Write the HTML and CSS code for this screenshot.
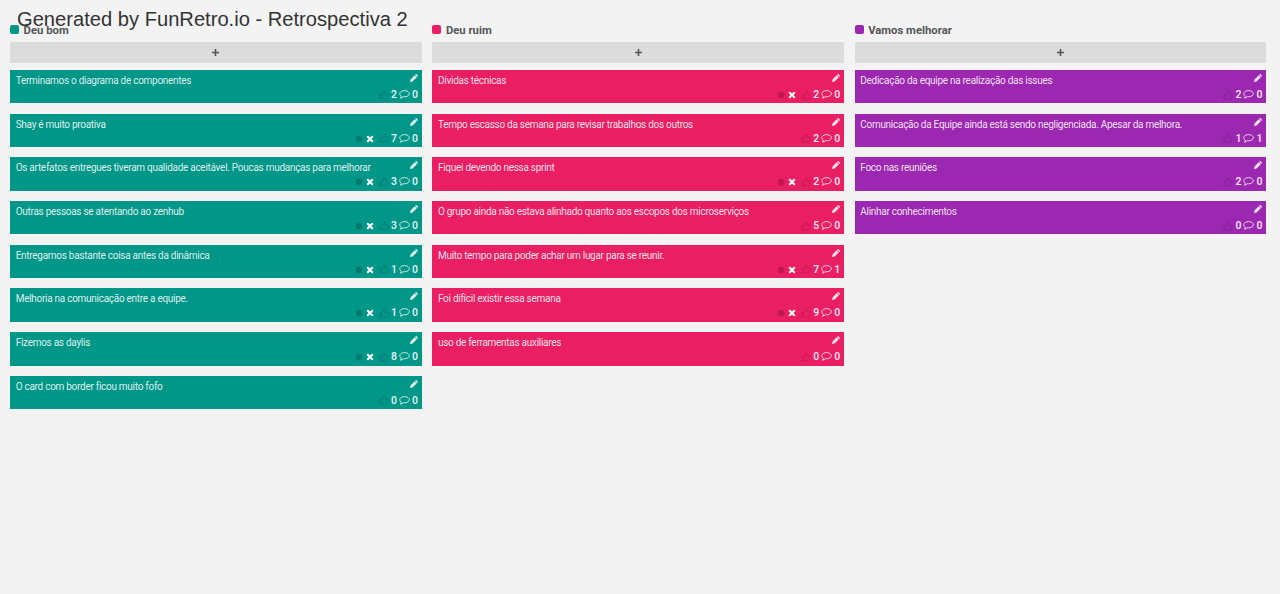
FILE: index.html
```html
<!DOCTYPE html>
<html lang="pt-BR">
<head>
<meta charset="utf-8">
<title>Retrospectiva 2</title>
<link rel="stylesheet" href="styles.css">
</head>
<body>
<svg class="sprite" aria-hidden="true">
  <symbol id="plus" viewBox="0 0 7 7"><path d="M2.7 0h1.6v2.7H7v1.6H4.300V7H2.700V4.300H0V2.700h2.700z"/></symbol>
  <symbol id="pencil" viewBox="0 0 8 8"><path d="M0 8l.5-2.600L4.700 1.200l2.100 2.100L2.600 7.500zM5.100.800l.5-.5q.5-.5 1 0l1.100 1.100q.5.5 0 1l-.5.5z"/></symbol>
  <symbol id="cross" viewBox="0 0 8 8"><path d="M1.9.5L4 2.6 6.1.5l1.4 1.4L5.4 4l2.1 2.1-1.4 1.4L4 5.4 1.9 7.5.5 6.1 2.6 4 .5 1.9z"/></symbol>
  <symbol id="dot" viewBox="0 0 8 8"><circle cx="4" cy="4" r="3.2"/></symbol>
  <symbol id="thumb" viewBox="0 0 10 10"><path d="M.7 4.6h2v4.1h-2zM2.7 4.8C4.2 3.7 4.7 2.8 4.8 1.2c.8-.5 1.7 0 1.6 1.2L6 4h2.5c1 0 1 1.2.4 1.5.5.6.2 1.2-.2 1.4.2.7-.1 1-.5 1.1 0 .8-.4 1.1-1.3 1.1H5.7c-1.3 0-2-.4-3-.4" fill="none" stroke="currentColor" stroke-width=".8"/></symbol>
  <symbol id="comment" viewBox="0 0 11 9"><path d="M5.600.6c2.700 0 4.700 1.400 4.700 3.100S8.300 6.800 5.600 6.800c-.5 0-.9 0-1.300-.1C3.400 7.500 2.500 8 1.400 8.200c.5-.6.8-1.200.9-2C1.300 5.600.8 4.700.8 3.700.8 2 2.800.6 5.600.6z" fill="none" stroke="currentColor" stroke-width=".9"/></symbol>
</svg>
<h1 class="board-title">Generated by FunRetro.io - Retrospectiva 2</h1>
<main class="board">
  <section class="column good">
    <h2 class="column-title"><i class="swatch"></i><span>Deu bom</span></h2>
    <button class="add"><svg><use href="#plus"/></svg></button>
    <article class="card"><p>Terminamos o diagrama de componentes</p><svg class="edit"><use href="#pencil"/></svg><footer><svg class="thumb"><use href="#thumb"/></svg><b>2</b><svg class="comment"><use href="#comment"/></svg><b>0</b></footer></article>
    <article class="card"><p>Shay é muito proativa</p><svg class="edit"><use href="#pencil"/></svg><footer><svg class="dot"><use href="#dot"/></svg><svg class="cross"><use href="#cross"/></svg><svg class="thumb"><use href="#thumb"/></svg><b>7</b><svg class="comment"><use href="#comment"/></svg><b>0</b></footer></article>
    <article class="card"><p>Os artefatos entregues tiveram qualidade aceitável. Poucas mudanças para melhorar</p><svg class="edit"><use href="#pencil"/></svg><footer><svg class="dot"><use href="#dot"/></svg><svg class="cross"><use href="#cross"/></svg><svg class="thumb"><use href="#thumb"/></svg><b>3</b><svg class="comment"><use href="#comment"/></svg><b>0</b></footer></article>
    <article class="card"><p>Outras pessoas se atentando ao zenhub</p><svg class="edit"><use href="#pencil"/></svg><footer><svg class="dot"><use href="#dot"/></svg><svg class="cross"><use href="#cross"/></svg><svg class="thumb"><use href="#thumb"/></svg><b>3</b><svg class="comment"><use href="#comment"/></svg><b>0</b></footer></article>
    <article class="card"><p>Entregamos bastante coisa antes da dinâmica</p><svg class="edit"><use href="#pencil"/></svg><footer><svg class="dot"><use href="#dot"/></svg><svg class="cross"><use href="#cross"/></svg><svg class="thumb"><use href="#thumb"/></svg><b>1</b><svg class="comment"><use href="#comment"/></svg><b>0</b></footer></article>
    <article class="card"><p>Melhoria na comunicação entre a equipe.</p><svg class="edit"><use href="#pencil"/></svg><footer><svg class="dot"><use href="#dot"/></svg><svg class="cross"><use href="#cross"/></svg><svg class="thumb"><use href="#thumb"/></svg><b>1</b><svg class="comment"><use href="#comment"/></svg><b>0</b></footer></article>
    <article class="card"><p>Fizemos as daylis</p><svg class="edit"><use href="#pencil"/></svg><footer><svg class="dot"><use href="#dot"/></svg><svg class="cross"><use href="#cross"/></svg><svg class="thumb"><use href="#thumb"/></svg><b>8</b><svg class="comment"><use href="#comment"/></svg><b>0</b></footer></article>
    <article class="card"><p>O card com border ficou muito fofo</p><svg class="edit"><use href="#pencil"/></svg><footer><svg class="thumb"><use href="#thumb"/></svg><b>0</b><svg class="comment"><use href="#comment"/></svg><b>0</b></footer></article>
  </section>
  <section class="column bad">
    <h2 class="column-title"><i class="swatch"></i><span>Deu ruim</span></h2>
    <button class="add"><svg><use href="#plus"/></svg></button>
    <article class="card"><p>Dívidas técnicas</p><svg class="edit"><use href="#pencil"/></svg><footer><svg class="dot"><use href="#dot"/></svg><svg class="cross"><use href="#cross"/></svg><svg class="thumb"><use href="#thumb"/></svg><b>2</b><svg class="comment"><use href="#comment"/></svg><b>0</b></footer></article>
    <article class="card"><p>Tempo escasso da semana para revisar trabalhos dos outros</p><svg class="edit"><use href="#pencil"/></svg><footer><svg class="thumb"><use href="#thumb"/></svg><b>2</b><svg class="comment"><use href="#comment"/></svg><b>0</b></footer></article>
    <article class="card"><p>Fiquei devendo nessa sprint</p><svg class="edit"><use href="#pencil"/></svg><footer><svg class="dot"><use href="#dot"/></svg><svg class="cross"><use href="#cross"/></svg><svg class="thumb"><use href="#thumb"/></svg><b>2</b><svg class="comment"><use href="#comment"/></svg><b>0</b></footer></article>
    <article class="card"><p>O grupo ainda não estava alinhado quanto aos escopos dos microserviços</p><svg class="edit"><use href="#pencil"/></svg><footer><svg class="thumb"><use href="#thumb"/></svg><b>5</b><svg class="comment"><use href="#comment"/></svg><b>0</b></footer></article>
    <article class="card"><p>Muito tempo para poder achar um lugar para se reunir.</p><svg class="edit"><use href="#pencil"/></svg><footer><svg class="dot"><use href="#dot"/></svg><svg class="cross"><use href="#cross"/></svg><svg class="thumb"><use href="#thumb"/></svg><b>7</b><svg class="comment"><use href="#comment"/></svg><b>1</b></footer></article>
    <article class="card"><p>Foi difícil existir essa semana</p><svg class="edit"><use href="#pencil"/></svg><footer><svg class="dot"><use href="#dot"/></svg><svg class="cross"><use href="#cross"/></svg><svg class="thumb"><use href="#thumb"/></svg><b>9</b><svg class="comment"><use href="#comment"/></svg><b>0</b></footer></article>
    <article class="card"><p>uso de ferramentas auxiliares</p><svg class="edit"><use href="#pencil"/></svg><footer><svg class="thumb"><use href="#thumb"/></svg><b>0</b><svg class="comment"><use href="#comment"/></svg><b>0</b></footer></article>
  </section>
  <section class="column improve">
    <h2 class="column-title"><i class="swatch"></i><span>Vamos melhorar</span></h2>
    <button class="add"><svg><use href="#plus"/></svg></button>
    <article class="card"><p>Dedicação da equipe na realização das issues</p><svg class="edit"><use href="#pencil"/></svg><footer><svg class="thumb"><use href="#thumb"/></svg><b>2</b><svg class="comment"><use href="#comment"/></svg><b>0</b></footer></article>
    <article class="card"><p>Comunicação da Equipe ainda está sendo negligenciada. Apesar da melhora.</p><svg class="edit"><use href="#pencil"/></svg><footer><svg class="thumb"><use href="#thumb"/></svg><b>1</b><svg class="comment"><use href="#comment"/></svg><b>1</b></footer></article>
    <article class="card"><p>Foco nas reuniões</p><svg class="edit"><use href="#pencil"/></svg><footer><svg class="thumb"><use href="#thumb"/></svg><b>2</b><svg class="comment"><use href="#comment"/></svg><b>0</b></footer></article>
    <article class="card"><p>Alinhar conhecimentos</p><svg class="edit"><use href="#pencil"/></svg><footer><svg class="thumb"><use href="#thumb"/></svg><b>0</b><svg class="comment"><use href="#comment"/></svg><b>0</b></footer></article>
  </section>
</main>
</body>
</html>
```

FILE: styles.css
```css
* { box-sizing: border-box; }
body {
  margin: 0;
  height: 594px;
  overflow: hidden;
  background: #f3f3f3;
  font-family: Roboto, sans-serif;
}
svg { display: block; fill: currentColor; }
.sprite { display: none; }
.board-title {
  position: absolute;
  left: 17px;
  top: 7px;
  z-index: 1;
  margin: 0;
  font: 400 20.15px/24px "Liberation Sans", Arial, sans-serif;
  color: #333;
  white-space: nowrap;
}
.board {
  display: grid;
  grid-template-columns: repeat(3, 411.900px);
  gap: 10.400px;
  padding: 24px 0 0 10px;
}
.column-title {
  display: flex;
  gap: 4.600px;
  height: 18px;
  margin: 0;
  font-size: 11.3px;
  line-height: 13px;
  font-weight: 700;
  color: #555;
}
.swatch {
  width: 9px;
  height: 9px;
  margin-top: 1px;
  border-radius: 2px;
  background: var(--tone);
}
.add {
  display: flex;
  align-items: center;
  justify-content: center;
  width: 100%;
  height: 21px;
  margin: 0 0 7px;
  padding: 0;
  border: 0;
  border-radius: 1px;
  background: #dcdcdc;
  color: #555;
}
.add svg { width: 7px; height: 7px; }
.card {
  display: grid;
  grid-template-columns: 1fr 8px;
  grid-template-rows: 18px 1fr;
  height: 33.4px;
  margin-bottom: 10.3px;
  padding: 0 4px 0 5.700px;
  background: var(--tone);
  color: rgba(255, 255, 255, .88);
}
.card p {
  margin: 0;
  padding-top: 4px;
  font-size: 10px;
  letter-spacing: -.28px;
  line-height: 14px;
  white-space: nowrap;
}
.edit { width: 8px; height: 8px; margin-top: 4px; }
.card footer {
  grid-column: 1 / -1;
  display: flex;
  align-items: center;
  justify-content: flex-end;
  height: 13px;
}
.card b { width: 6px; font-size: 10.5px; line-height: 13px; font-weight: 600; }
.thumb { width: 10px; height: 10px; margin-right: 2px; color: rgba(0, 0, 0, .15); }
.comment { width: 11px; height: 9px; margin: 0 2px 0 2px; }
.cross { width: 8px; height: 8px; margin: 1px 5px 0 3px; color: #fff; }
.dot { width: 8px; height: 8px; margin-top: 1px; color: rgba(0, 0, 0, .18); }
.good { --tone: #009688; }
.bad { --tone: #e91e63; }
.improve { --tone: #9c27b0; }
```
